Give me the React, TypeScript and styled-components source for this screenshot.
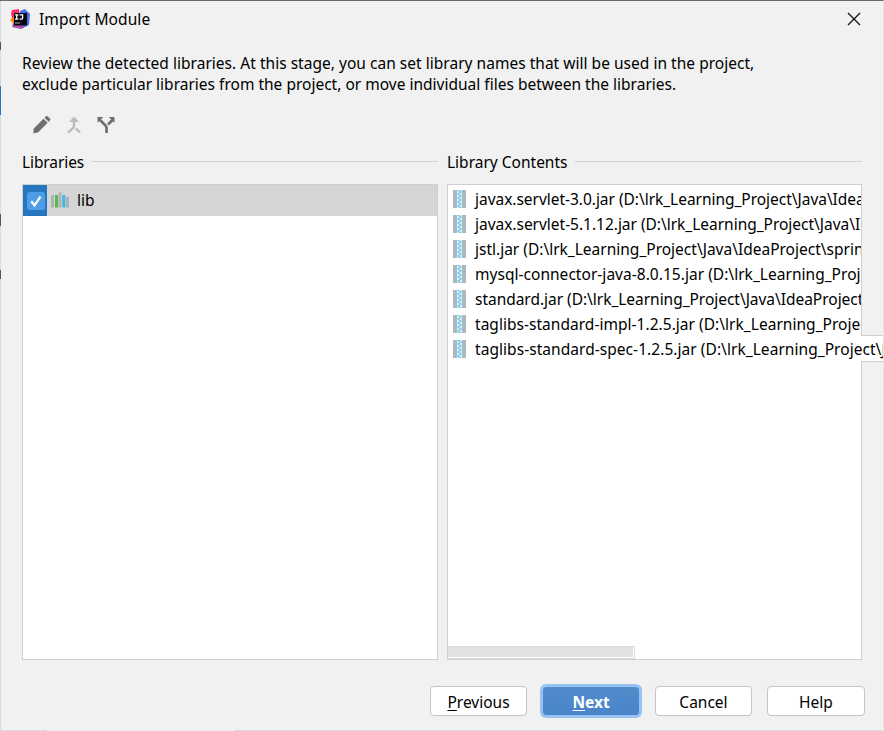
import React from "react";
import styled, { createGlobalStyle } from "styled-components";

const Global = createGlobalStyle`
  * { box-sizing: border-box; }
  body { margin: 0; background: #f1f1f1; overflow: hidden; }
`;

const Dialog = styled.div`
  position: relative;
  width: 884px;
  height: 731px;
  display: flex;
  flex-direction: column;
  overflow: hidden;
  padding: 0 0 1px 1px;
  background: #f1f1f1;
  color: #000;
  font-family: "Noto Sans", "Open Sans", sans-serif;
  font-size: 15.5px;
  line-height: 21px;
  white-space: pre;
  border-top: 1px solid #6b696b;
  border-right: 1px solid #e4e4e4;
  box-shadow: inset 1px 0 #d5dae2, inset 0 -1px #dcdcdc;
`;

/* Slivers of the window behind that show past the dialog's left edge */
const BehindMark = styled.i<{ $top: number; $height: number; $color: string }>`
  position: absolute;
  left: 0;
  top: ${(p) => p.$top}px;
  width: 1px;
  height: ${(p) => p.$height}px;
  background: ${(p) => p.$color};
`;

const BehindBottom = styled.i`
  position: absolute;
  left: 45px;
  bottom: 0;
  width: 192px;
  height: 1px;
  background: #eeeeee;
  border: solid #bdbdbd;
  border-width: 0 1px;
`;

const TitleBar = styled.header`
  display: flex;
  align-items: center;
  height: 36px;
  padding: 0 22px 0 9px;
`;

const Label = styled.span<{ $spacing?: number }>`
  letter-spacing: ${(p) => p.$spacing ?? 0}px;
`;

const Title = styled(Label)`
  flex: 1;
  margin-left: 9px;
`;

const Intro = styled.div`
  display: flex;
  flex-direction: column;
  padding: 16px 21px 0;
`;

const Toolbar = styled.div`
  display: flex;
  gap: 12px;
  height: 20px;
  margin: 20px 0 0 31px;
`;

const Columns = styled.main`
  display: grid;
  grid-template-columns: 416px 415px;
  gap: 9px;
  margin: 17px 0 0 21px;
`;

const Group = styled.section`
  min-width: 0;
`;

const GroupTitle = styled.div`
  display: flex;
  align-items: center;
  height: 21px;
  gap: 8px;
  margin-bottom: 11px;
  &::after {
    content: "";
    flex: 1;
    height: 1px;
    margin-bottom: 2px;
    background: #d0d0d0;
  }
`;

const Panel = styled.div`
  position: relative;
  height: 476px;
  background: #fff;
  border: 1px solid #cfcfcf;
`;

const LibraryRow = styled.div`
  display: flex;
  align-items: center;
  height: 31px;
  background: #d5d5d5;
`;

const LibraryName = styled(Label)`
  margin-left: 8px;
`;

const CheckCell = styled.div`
  display: grid;
  place-items: center;
  width: 24px;
  height: 31px;
  margin-right: 4px;
  padding-left: 1px;
  background: #2675bf;
`;

const JarList = styled.div`
  padding-top: 2px;
`;

const JarRow = styled.div<{ $expanded?: boolean }>`
  position: relative;
  display: flex;
  align-items: center;
  height: 25px;
  padding-left: 5px;
  overflow: ${(p) => (p.$expanded ? "visible" : "hidden")};
  svg { flex: none; margin: 0 9px 1px 0; }
  span { position: relative; }
`;

const Overflow = styled.div`
  position: absolute;
  left: 413px;
  top: -2px;
  width: 40px;
  height: 27px;
  background: #fff;
  border: solid #cfcfcf;
  border-width: 1px 0;
`;

const Scrollbar = styled.div`
  position: absolute;
  left: 0;
  bottom: 0;
  width: 187px;
  height: 13px;
  background: #e1e1e1;
  border: 1px solid #dadada;
  border-width: 1px 1px 1px 0;
  box-shadow: inset -1px -1px #fff;
`;

const Footer = styled.footer`
  display: grid;
  grid-template-columns: 97px 98px 97px 98px;
  gap: 15px;
  margin: 26px 0 0 429px;
`;

const Button = styled.button<{ $primary?: boolean }>`
  height: 30px;
  padding: 2px 0 0;
  border: 1px solid ${(p) => (p.$primary ? "#6fa5dd" : "#c4c4c4")};
  border-radius: 4px;
  outline: ${(p) => (p.$primary ? "3px solid #97c3f3" : "none")};
  outline-offset: -1px;
  background: ${(p) => (p.$primary ? "linear-gradient(#528ccc, #4985c9)" : "#fff")};
  color: ${(p) => (p.$primary ? "#fff" : "#000")};
  font: ${(p) => (p.$primary ? 700 : 400)} 15.5px/21px "Noto Sans", sans-serif;
  u { text-underline-offset: 2px; }
`;

const IdeaLogo = () => (
  <svg width="20" height="20" viewBox="0 0 20 20">
    <path d="M2 1 9 0 9 9 4 14 1 12 2 8 1 5Z" fill="#fc2d62" />
    <path d="M0 11 4 8 6 16 3 14Z" fill="#f98a12" />
    <path d="M10 2 15 0 20 5 19 16 11 20 7 14Z" fill="#4a6ee6" />
    <path d="M3 14 8 14 14 18 11 20 2 18Z" fill="#b24aa8" />
    <rect x="4" y="4" width="13" height="12.5" fill="#080810" />
    <path d="M5 5.8h3.4M6.7 5.8v4.4M5 10.2h3.4M9.6 5.8h3v3.3q0 1.1-1 1.1h-2" fill="none" stroke="#fff" strokeWidth="1.3" />
    <path d="M5 14h5" stroke="#aaa" />
  </svg>
);

const CloseIcon = () => (
  <svg width="14" height="14" viewBox="0 0 14 14">
    <path d="M1 1 13 13M13 1 1 13" stroke="#111" strokeWidth="1.3" />
  </svg>
);

const PencilIcon = () => (
  <svg width="20" height="20" viewBox="0 0 16 16">
    <path d="m1 14.6.4-3.9 7.8-7.8 3.3 3.3-7.8 7.8ZM10 2.1l1.2-1.2q.6-.5 1.2 0l2.1 2.1q.5.6 0 1.2l-1.2 1.2Z" fill="#6e6e6e" />
  </svg>
);

const MergeIcon = () => (
  <svg width="20" height="20" viewBox="0 0 20 20">
    <path d="M4 17.6 9 13.2q1-1 1-2.4V5M11.8 13.6 16 17.4" fill="none" stroke="#bcbcbc" strokeWidth="2.4" />
    <path d="m10 1.5 5 5.5H5Z" fill="#bcbcbc" />
  </svg>
);

const SplitIcon = () => (
  <svg width="20" height="20" viewBox="0 0 20 20">
    <path d="M10.5 18v-5q0-1.5-1.2-2.7L4 5M12 9.5 16.5 5" fill="none" stroke="#6e6e6e" strokeWidth="2.7" />
    <path d="M1.5 2h5.8L1.5 7.8ZM18.5 2h-5.8l5.8 5.8Z" fill="#6e6e6e" />
  </svg>
);

const CheckIcon = () => (
  <svg width="18" height="18" viewBox="0 0 18 18">
    <rect width="18" height="18" rx="2.5" fill="#4e9de7" />
    <path d="m4.3 9.3 3.2 4 6-8.6" fill="none" stroke="#fff" strokeWidth="2.3" />
  </svg>
);

const LibraryIcon = () => (
  <svg width="18" height="18" viewBox="0 0 18 18">
    <path d="M0 3h3v12.5H0ZM7.5.5h3v15h-3ZM15 5h3v10.5h-3Z" fill="#a9b3ba" />
    <path d="M4 3h3v12.5H4Z" fill="#62b543" />
    <path d="M11.3 3h3v12.5h-3Z" fill="#40b6e0" />
  </svg>
);

const JarIcon = () => (
  <svg width="13" height="18" viewBox="0 0 13 18">
    <path d="M0 0h4v18H0ZM9 0h4v18H9Z" fill="#adb7be" />
    <path d="M4 0h5v18H4Z" fill="#d9f1fa" />
    <path
      d="M4.5 0 8 2 5 4 8 6 5 8 8 10 5 12 8 14 5 16 8 18"
      fill="none"
      stroke="#6cc6e8"
      strokeWidth="1.2"
    />
  </svg>
);

const jars = [
  { text: "javax.servlet-3.0.jar (D:\\lrk_Learning_Project\\Java\\Idea", spacing: -0.03 },
  { text: "javax.servlet-5.1.12.jar (D:\\lrk_Learning_Project\\Java\\Id", spacing: -0.02 },
  { text: "jstl.jar (D:\\lrk_Learning_Project\\Java\\IdeaProject\\sprin", spacing: 0 },
  { text: "mysql-connector-java-8.0.15.jar (D:\\lrk_Learning_Proje", spacing: 0.03 },
  { text: "standard.jar (D:\\lrk_Learning_Project\\Java\\IdeaProject", spacing: -0.03 },
  { text: "taglibs-standard-impl-1.2.5.jar (D:\\lrk_Learning_Projec", spacing: 0.03 },
  { text: "taglibs-standard-spec-1.2.5.jar (D:\\lrk_Learning_Project\\J", spacing: 0.05 },
];

export default function App() {
  return (
    <>
      <Global />
      <Dialog>
        <BehindMark $top={41} $height={8} $color="#555" />
        <BehindMark $top={85} $height={29} $color="#2675bf" />
        <BehindMark $top={213} $height={12} $color="#555" />
        <BehindMark $top={269} $height={9} $color="#555" />
        <BehindBottom />
        <TitleBar>
          <IdeaLogo />
          <Title $spacing={0.1}>Import Module</Title>
          <CloseIcon />
        </TitleBar>
        <Intro>
          <Label $spacing={0.024}>Review the detected libraries. At this stage, you can set library names that will be used in the project,</Label>
          <Label $spacing={0.005}>exclude particular libraries from the project, or move individual files between the libraries.</Label>
        </Intro>
        <Toolbar>
          <PencilIcon />
          <MergeIcon />
          <SplitIcon />
        </Toolbar>
        <Columns>
          <Group>
            <GroupTitle><Label $spacing={-0.1}>Libraries</Label></GroupTitle>
            <Panel>
              <LibraryRow>
                <CheckCell><CheckIcon /></CheckCell>
                <LibraryIcon />
                <LibraryName>lib</LibraryName>
              </LibraryRow>
            </Panel>
          </Group>
          <Group>
            <GroupTitle><Label>Library Contents</Label></GroupTitle>
            <Panel>
              <JarList>
                {jars.map((jar, i) => (
                  <JarRow key={jar.text} $expanded={i === jars.length - 1}>
                    {i === jars.length - 1 && <Overflow />}
                    <JarIcon />
                    <Label $spacing={jar.spacing}>{jar.text}</Label>
                  </JarRow>
                ))}
              </JarList>
              <Scrollbar />
            </Panel>
          </Group>
        </Columns>
        <Footer>
          <Button><u>P</u>revious</Button>
          <Button $primary><u>N</u>ext</Button>
          <Button>Cancel</Button>
          <Button>Help</Button>
        </Footer>
      </Dialog>
    </>
  );
}
